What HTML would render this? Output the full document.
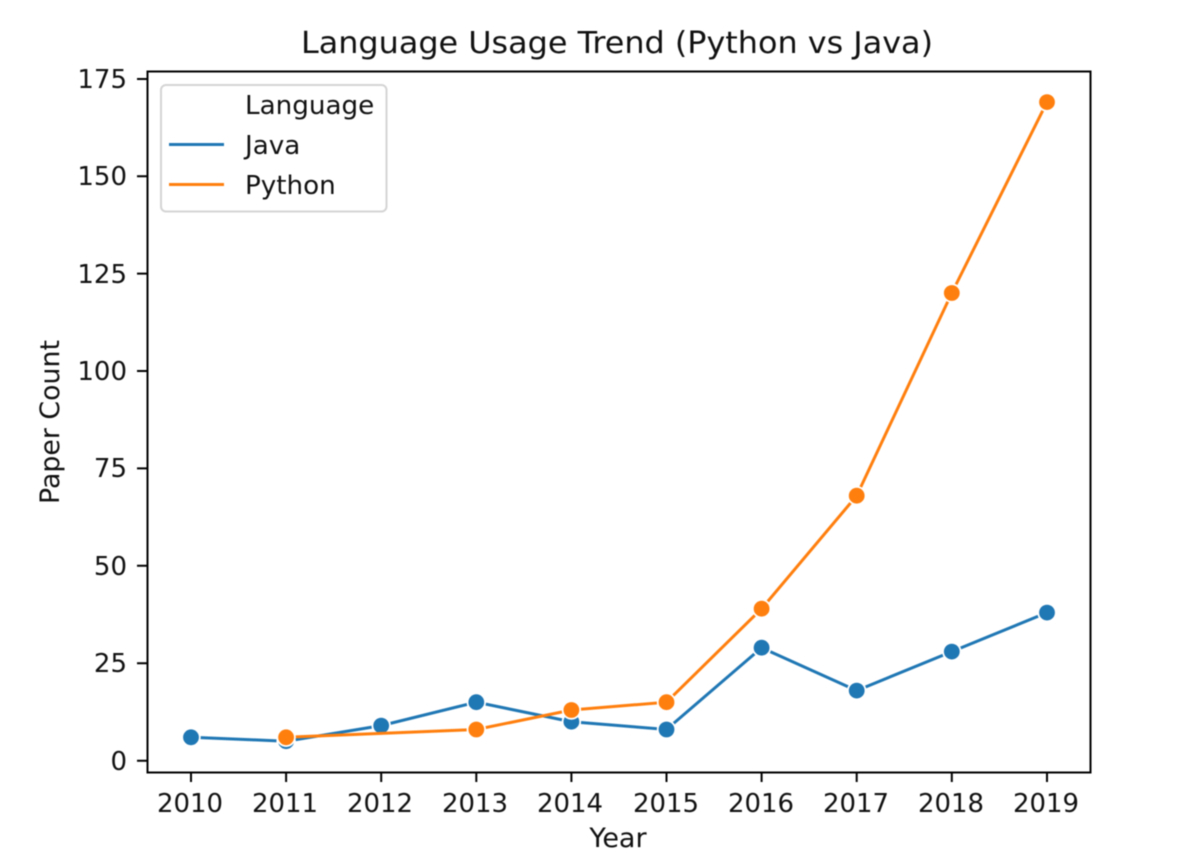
<!DOCTYPE html>
<html>
<head>
<meta charset="utf-8">
<style>
html,body{margin:0;padding:0;background:#fff;width:1196px;height:865px;overflow:hidden}
svg{display:block;filter:blur(.6px)}
text{font-family:"DejaVu Sans",sans-serif;fill:#111;font-size:26px}
</style>
</head>
<body>
<svg width="1196" height="865" viewBox="0 0 1196 865" xmlns="http://www.w3.org/2000/svg">
<rect width="1196" height="865" fill="#fff"/>
<text x="617" y="53" text-anchor="middle" style="font-size:30px" textLength="632" lengthAdjust="spacingAndGlyphs">Language Usage Trend (Python vs Java)</text>

<!-- ticks -->
<g stroke="#000" stroke-width="2" fill="none">
<path d="M137 79H147M137 176.2H147M137 273.6H147M137 371H147M137 468.4H147M137 565.8H147M137 663.2H147M137 760.7H147"/>
<path d="M191 772V782M286.1 772V782M381.2 772V782M476.3 772V782M571.4 772V782M666.5 772V782M761.6 772V782M856.7 772V782M951.8 772V782M1047 772V782"/>
</g>

<g text-anchor="end">
<text x="127" y="88">175</text>
<text x="127" y="185">150</text>
<text x="127" y="283">125</text>
<text x="127" y="380">100</text>
<text x="127" y="477">75</text>
<text x="127" y="575">50</text>
<text x="127" y="672">25</text>
<text x="127" y="770">0</text>
</g>
<g text-anchor="middle">
<text x="190" y="812" textLength="66" lengthAdjust="spacingAndGlyphs">2010</text>
<text x="285" y="812" textLength="66" lengthAdjust="spacingAndGlyphs">2011</text>
<text x="380" y="812" textLength="66" lengthAdjust="spacingAndGlyphs">2012</text>
<text x="475" y="812" textLength="66" lengthAdjust="spacingAndGlyphs">2013</text>
<text x="570" y="812" textLength="66" lengthAdjust="spacingAndGlyphs">2014</text>
<text x="666" y="812" textLength="66" lengthAdjust="spacingAndGlyphs">2015</text>
<text x="761" y="812" textLength="66" lengthAdjust="spacingAndGlyphs">2016</text>
<text x="856" y="812" textLength="66" lengthAdjust="spacingAndGlyphs">2017</text>
<text x="951" y="812" textLength="66" lengthAdjust="spacingAndGlyphs">2018</text>
<text x="1046" y="812" textLength="66" lengthAdjust="spacingAndGlyphs">2019</text>
<text x="618" y="847" style="font-size:27px">Year</text>
</g>
<text transform="translate(59,422) rotate(-90)" text-anchor="middle" style="font-size:26.8px">Paper Count</text>

<!-- Java -->
<polyline fill="none" stroke="#1f77b4" stroke-width="3" points="191,737.3 286.1,741.2 381.2,725.6 476.3,702.2 571.4,721.7 666.5,729.5 761.6,647.7 856.7,690.6 951.8,651.6 1047,612.6"/>
<g fill="#1f77b4" stroke="#fff" stroke-width="1.8">
<circle cx="191" cy="737.3" r="8.8"/>
<circle cx="286.1" cy="741.2" r="8.8"/>
<circle cx="381.2" cy="725.6" r="8.8"/>
<circle cx="476.3" cy="702.2" r="8.8"/>
<circle cx="571.4" cy="721.7" r="8.8"/>
<circle cx="666.5" cy="729.5" r="8.8"/>
<circle cx="761.6" cy="647.7" r="8.8"/>
<circle cx="856.7" cy="690.6" r="8.8"/>
<circle cx="951.8" cy="651.6" r="8.8"/>
<circle cx="1047" cy="612.6" r="8.8"/>
</g>

<!-- Python -->
<polyline fill="none" stroke="#ff7f0e" stroke-width="3" points="286.1,737.3 381.2,733.4 476.3,729.5 571.4,710 666.5,702.2 761.6,608.7 856.7,495.7 951.8,293 1047,102.1"/>
<g fill="#ff7f0e" stroke="#fff" stroke-width="1.8">
<circle cx="286.1" cy="737.3" r="8.8"/>
<circle cx="476.3" cy="729.5" r="8.8"/>
<circle cx="571.4" cy="710" r="8.8"/>
<circle cx="666.5" cy="702.2" r="8.8"/>
<circle cx="761.6" cy="608.7" r="8.8"/>
<circle cx="856.7" cy="495.7" r="8.8"/>
<circle cx="951.8" cy="293" r="8.8"/>
<circle cx="1047" cy="102.1" r="8.8"/>
</g>

<!-- axes frame -->
<rect x="147.5" y="71.5" width="943" height="701" fill="none" stroke="#000" stroke-width="2"/>

<!-- legend -->
<rect x="161" y="85" width="225.5" height="126.5" rx="5" fill="#fff" fill-opacity=".8" stroke="#d4d4d4" stroke-width="2"/>
<text x="245" y="114" style="font-size:26.2px">Language</text>
<text x="245" y="154" style="font-size:26.2px">Java</text>
<text x="245" y="194" style="font-size:26.2px">Python</text>
<path d="M169 144.5H224" stroke="#1f77b4" stroke-width="3"/>
<path d="M169 184.5H224" stroke="#ff7f0e" stroke-width="3"/>
</svg>
</body>
</html>
